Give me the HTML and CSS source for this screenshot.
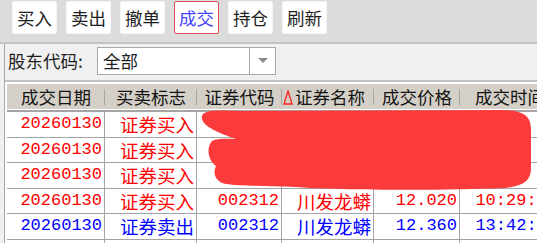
FILE: index.html
```html
<!DOCTYPE html>
<html lang="zh-CN">
<head>
  <meta charset="UTF-8">
  <title>成交查询</title>
  <link rel="stylesheet" href="styles.css">
</head>
<body>

  <div class="toolbar">
    <button class="tool">买入</button>
    <button class="tool">卖出</button>
    <button class="tool">撤单</button>
    <button class="tool active">成交</button>
    <button class="tool">持仓</button>
    <button class="tool">刷新</button>
  </div>

  <div class="panel">
    <div class="filter">
      <label class="filter-label">股东代码:</label>
      <div class="combo">
        <span class="combo-value">全部</span>
        <span class="combo-arrow">
          <svg width="10" height="6" viewBox="0 0 10 6"><polygon points="0,0 10,0 5,5" fill="#8a8a8a"/></svg>
        </span>
      </div>
    </div>

    <div class="grid">
      <div class="grid-head">
        <div class="th">成交日期</div>
        <div class="th">买卖标志</div>
        <div class="th">证券代码</div>
        <div class="th th-sorted">
          <svg class="sort-mark" width="10" height="15" viewBox="0 0 10 15"><polygon points="5,1 9,14 1,14" fill="none" stroke="#ff1e1e" stroke-width="1.3"/></svg>证券名称
        </div>
        <div class="th">成交价格</div>
        <div class="th">成交时间</div>
      </div>

      <div class="grid-body">
        <div class="row buy">
          <div class="td num">20260130</div><div class="td cn">证券买入</div>
          <div class="td"></div><div class="td"></div><div class="td"></div><div class="td"></div>
        </div>
        <div class="row buy">
          <div class="td num">20260130</div><div class="td cn">证券买入</div>
          <div class="td"></div><div class="td"></div><div class="td"></div><div class="td"></div>
        </div>
        <div class="row buy">
          <div class="td num">20260130</div><div class="td cn">证券买入</div>
          <div class="td"></div><div class="td"></div><div class="td"></div><div class="td"></div>
        </div>
        <div class="row buy">
          <div class="td num">20260130</div><div class="td cn">证券买入</div>
          <div class="td num">002312</div><div class="td cn">川发龙蟒</div>
          <div class="td num">12.020</div><div class="td num">10:29:41</div>
        </div>
        <div class="row sell">
          <div class="td num">20260130</div><div class="td cn">证券卖出</div>
          <div class="td num">002312</div><div class="td cn">川发龙蟒</div>
          <div class="td num">12.360</div><div class="td num">13:42:08</div>
        </div>
        <div class="row buy">
          <div class="td num">20260130</div><div class="td cn">证券买入</div>
          <div class="td num">002312</div><div class="td cn">川发龙蟒</div>
          <div class="td num">12.050</div><div class="td num">14:05:17</div>
        </div>
      </div>
    </div>
  </div>

  <!-- hand-drawn mask over the first rows -->
  <svg class="scribble" width="537" height="243" viewBox="0 0 537 243">
    <path d="M202 116 C204 110 215 110 240 111 L500 110 C528 110 532 118 531 135 L531 168 C531 182 522 186 505 188 C440 191 330 190 295 187 C270 186 240 186 226 184 C214 182 213 172 216 166 C208 160 206 148 212 141 C218 138 228 139 236 139 C220 133 200 126 202 116 Z" fill="#fb3b3b"/>
  </svg>

</body>
</html>
```

FILE: styles.css
```css
:root {
  --toolbar-bg: #dcdcdc;
  --panel-bg: #f0f0f0;
  --head-bg: #d4d0c8;
  --grid-line: #a4a4a4;
  --rule: #c2c2c2;
  --buy: #ff0000;
  --sell: #0000ff;
}

* {
  box-sizing: border-box;
}

body {
  margin: 0;
  width: 537px;
  height: 243px;
  overflow: hidden;
  position: relative;
  background: var(--panel-bg);
  font-family: "Noto Sans CJK SC", sans-serif;
  color: #1e1e1e;
}

.toolbar {
  display: flex;
  gap: 9px;
  height: 44px;
  padding: 1px 12px 0;
  background: var(--toolbar-bg);
  border-bottom: 2px solid var(--rule);
}

.tool {
  width: 45px;
  height: 33px;
  padding: 0;
  background: #fff;
  border: 1px solid #f6f6f6;
  border-radius: 2px;
  font-family: "Noto Sans CJK SC", sans-serif;
  font-size: 17.5px;
  line-height: 31px;
  color: #1e1e1e;
}

.tool.active {
  border-color: #e05050;
  color: #4646ff;
}

.panel {
  margin-left: 4px;
  border-left: 1px solid #a8a8a8;
}

.filter {
  display: flex;
  align-items: center;
  height: 38px;
  padding: 3px 0 5px 3px;
  border-bottom: 2px solid var(--rule);
}

.filter-label {
  width: 89px;
  font-size: 17.5px;
  line-height: 28px;
}

.combo {
  display: flex;
  width: 179px;
  height: 28px;
  background: #fff;
  border: 1px solid #a8a8a8;
}

.combo-value {
  flex: 1;
  padding-left: 5px;
  font-size: 17.5px;
  line-height: 26px;
}

.combo-arrow {
  display: flex;
  align-items: center;
  justify-content: center;
  width: 26px;
  border-left: 1px solid #a8a8a8;
}

.grid {
  padding: 2px 0 0 2px;
  background: #fff;
}

.grid-head,
.row {
  display: grid;
  grid-template-columns: 98px 92px 85px 92px 86px 100px;
  width: 553px;
}

.grid-head {
  height: 26px;
  background: var(--head-bg);
  border-bottom: 1px solid #fff;
}

.th {
  font-size: 17.5px;
  line-height: 25px;
  text-align: center;
  white-space: nowrap;
  overflow: hidden;
  color: #141414;
  background: linear-gradient(#a6a6a6, #a6a6a6) right center / 1px 16px no-repeat;
}

.th-sorted {
  text-align: left;
  padding-left: 1px;
}

.sort-mark {
  vertical-align: -1px;
  margin-right: 2px;
}

.grid-body {
  border-top: 2px solid var(--grid-line);
}

.row {
  height: 25.5px;
  border-bottom: 1px solid var(--grid-line);
}

.row.buy {
  color: var(--buy);
}

.row.sell {
  color: var(--sell);
}

.td {
  padding-right: 2px;
  border-right: 1px solid var(--grid-line);
  text-align: right;
  white-space: nowrap;
  overflow: hidden;
  line-height: 24.5px;
}

.td.num {
  font-family: "Liberation Mono", monospace;
  font-size: 17px;
}

.td.cn {
  font-family: "Noto Sans CJK SC", sans-serif;
  font-size: 18.5px;
}

.scribble {
  position: absolute;
  top: 0;
  left: 0;
  pointer-events: none;
}
```
